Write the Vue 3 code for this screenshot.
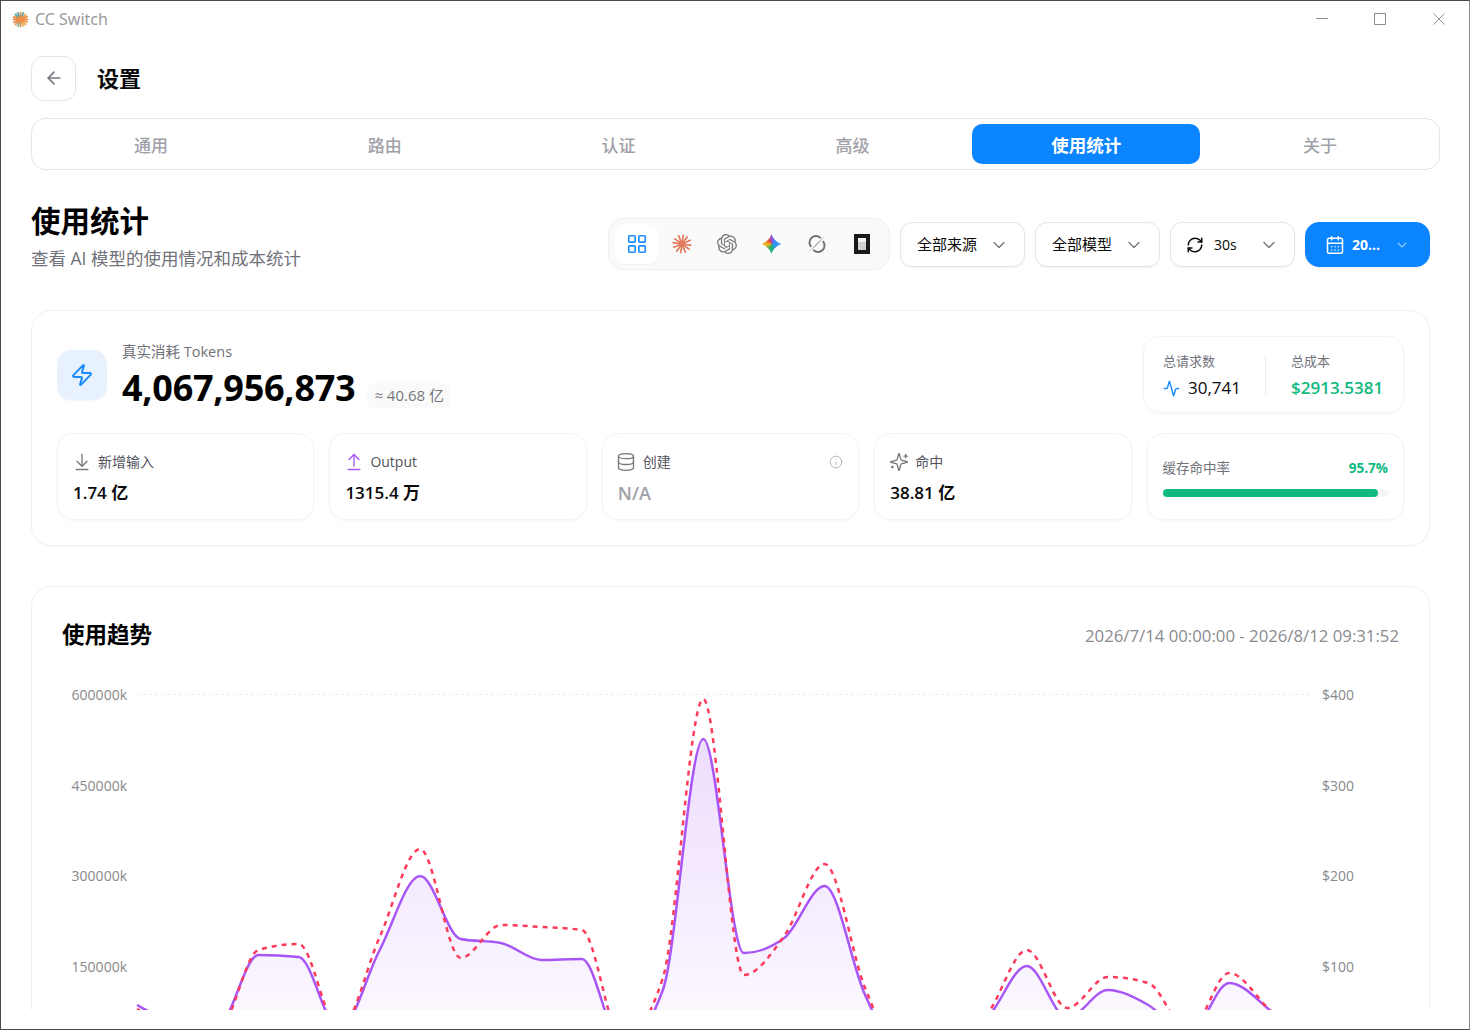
<script setup>
import { computed } from 'vue'

const tabs = ['通用', '路由', '认证', '高级', '使用统计', '关于']
const claudeRays = [0, 28, 58, 90, 118, 150, 180, 208, 240, 270, 298, 330]
const logoRays = [
  { a: 0, c: '#e8a04c' }, { a: 45, c: '#e8a95a' }, { a: 90, c: '#ea8f45' }, { a: 135, c: '#e9b25a' },
  { a: 180, c: '#e8a04c' }, { a: 225, c: '#e89a52' }, { a: 270, c: '#e8843c' }, { a: 315, c: '#5fa8a8' },
  { a: 22, c: '#5c9ca8' }, { a: 67, c: '#e8843c' }, { a: 112, c: '#ee9a50' }, { a: 157, c: '#e8b460' },
  { a: 202, c: '#7fb0a0' }, { a: 247, c: '#e08a4c' }, { a: 292, c: '#e8843c' }, { a: 337, c: '#5c9ca8' },
]

const xs = Array.from({ length: 30 }, (_, i) => 137 + i * 40.45)

const purple = [1005, 1022, 1025, 955, 957, 1030, 950, 876, 939, 943, 960, 959, 1045, 990, 739, 953, 938, 886, 995, 1060, 1040, 1019, 966, 1018, 990, 1005, 1035, 983, 1010, 1050]
const red = [1009, 1026, 1030, 950, 944, 1030, 937, 849, 958, 925, 927, 930, 1040, 978, 699, 975, 936, 864, 988, 1060, 1040, 1015, 950, 1008, 977, 983, 1032, 973, 1010, 1050]

// same monotone interpolation as the chart lib
function monotone(ys) {
  const n = ys.length
  const h = xs[1] - xs[0]
  const d = ys.slice(1).map((y, i) => (y - ys[i]) / h)
  const m = ys.map((_, i) => {
    if (i === 0 || i === n - 1) return 0
    const a = d[i - 1]
    const b = d[i]
    if (a * b <= 0) return 0
    return Math.sign(a) * Math.min(2 * Math.abs(a), 2 * Math.abs(b), Math.abs(a + b) / 2)
  })
  m[0] = (3 * d[0] - m[1]) / 2
  m[n - 1] = (3 * d[n - 2] - m[n - 2]) / 2
  let path = `M${xs[0]},${ys[0]}`
  for (let i = 0; i < n - 1; i++) {
    const t = h / 3
    path += `C${xs[i] + t},${ys[i] + m[i] * t} ${xs[i + 1] - t},${ys[i + 1] - m[i + 1] * t} ${xs[i + 1]},${ys[i + 1]}`
  }
  return path
}

const purpleLine = computed(() => monotone(purple))
const purpleArea = computed(() => `${monotone(purple)}L${xs[29]},1057L${xs[0]},1057Z`)
const redLine = computed(() => monotone(red))

const ticks = [
  { y: 694, left: '600000k', right: '$400' },
  { y: 785, left: '450000k', right: '$300' },
  { y: 875, left: '300000k', right: '$200' },
  { y: 966, left: '150000k', right: '$100' },
]
</script>

<template>
  <div class="window">
    <div class="titlebar">
      <svg class="app-logo" viewBox="0 0 24 24">
        <line v-for="r in logoRays" :key="r.a" x1="12" y1="12" x2="12" y2="1" :stroke="r.c" stroke-width="2.6" :transform="`rotate(${r.a} 12 12)`" />
        <circle cx="12" cy="12" r="5" fill="#ea8f45" />
      </svg>
      <span class="app-name">CC Switch</span>
      <div class="win-controls">
        <svg viewBox="0 0 12 12"><path d="M0 5.5h12" /></svg>
        <svg viewBox="0 0 12 12"><rect x="0.5" y="0.5" width="11" height="11" /></svg>
        <svg viewBox="0 0 12 12"><path d="M0.5 0.5l11 11M11.5 0.5l-11 11" /></svg>
      </div>
    </div>

    <main class="content">
      <header class="page-head">
        <button class="back-btn">
          <svg class="ic" viewBox="0 0 24 24"><path d="m12 19-7-7 7-7" /><path d="M19 12H5" /></svg>
        </button>
        <h1>设置</h1>
      </header>

      <nav class="tabs">
        <div v-for="t in tabs" :key="t" class="tab" :class="{ active: t === '使用统计' }">{{ t }}</div>
      </nav>

      <section class="usage-head">
        <div class="usage-title">
          <h2>使用统计</h2>
          <p>查看 AI 模型的使用情况和成本统计</p>
        </div>
        <div class="filters">
          <div class="app-picker">
            <div class="app-btn active">
              <svg class="ic blue" viewBox="0 0 24 24">
                <rect x="3" y="3" width="7" height="7" rx="1" /><rect x="14" y="3" width="7" height="7" rx="1" />
                <rect x="14" y="14" width="7" height="7" rx="1" /><rect x="3" y="14" width="7" height="7" rx="1" />
              </svg>
            </div>
            <div class="app-btn">
              <svg class="brand" viewBox="0 0 24 24">
                <line v-for="a in claudeRays" :key="a" x1="12" y1="12" x2="12" y2="0.5" stroke="#e07a5a" stroke-width="2" :transform="`rotate(${a + 8} 12 12)`" />
                <circle cx="12" cy="12" r="3.5" fill="#e07a5a" />
              </svg>
            </div>
            <div class="app-btn">
              <svg class="brand" viewBox="0 0 24 24">
                <path fill="#77777d" d="M22.2819 9.8211a5.9847 5.9847 0 0 0-.5157-4.9108 6.0462 6.0462 0 0 0-6.5098-2.9A6.0651 6.0651 0 0 0 4.9807 4.1818a5.9847 5.9847 0 0 0-3.9977 2.9 6.0462 6.0462 0 0 0 .7427 7.0966 5.98 5.98 0 0 0 .511 4.9107 6.051 6.051 0 0 0 6.5146 2.9001A5.9847 5.9847 0 0 0 13.2599 24a6.0557 6.0557 0 0 0 5.7718-4.2058 5.9894 5.9894 0 0 0 3.9977-2.9001 6.0557 6.0557 0 0 0-.7475-7.0729zm-9.022 12.6081a4.4755 4.4755 0 0 1-2.8764-1.0408l.1419-.0804 4.7783-2.7582a.7948.7948 0 0 0 .3927-.6813v-6.7369l2.02 1.1686a.071.071 0 0 1 .038.052v5.5826a4.504 4.504 0 0 1-4.4945 4.4944zm-9.6607-4.1254a4.4708 4.4708 0 0 1-.5346-3.0137l.142.0852 4.783 2.7582a.7712.7712 0 0 0 .7806 0l5.8428-3.3685v2.3324a.0804.0804 0 0 1-.0332.0615L9.74 19.9502a4.4992 4.4992 0 0 1-6.1408-1.6464zM2.3408 7.8956a4.485 4.485 0 0 1 2.3655-1.9728V11.6a.7664.7664 0 0 0 .3879.6765l5.8144 3.3543-2.0201 1.1685a.0757.0757 0 0 1-.071 0l-4.8303-2.7865A4.504 4.504 0 0 1 2.3408 7.872zm16.5963 3.8558L13.1038 8.364 15.1192 7.2a.0757.0757 0 0 1 .071 0l4.8303 2.7913a4.4944 4.4944 0 0 1-.6765 8.1042v-5.6772a.79.79 0 0 0-.407-.667zm2.0107-3.0231l-.142-.0852-4.7735-2.7818a.7759.7759 0 0 0-.7854 0L9.409 9.2297V6.8974a.0662.0662 0 0 1 .0284-.0615l4.8303-2.7866a4.4992 4.4992 0 0 1 6.6802 4.66zM8.3065 12.863l-2.02-1.1638a.0804.0804 0 0 1-.038-.0567V6.0742a4.4992 4.4992 0 0 1 7.3757-3.4537l-.142.0805L8.704 5.459a.7948.7948 0 0 0-.3927.6813zm1.0976-2.3654l2.602-1.4998 2.6069 1.4998v2.9994l-2.5974 1.4997-2.6067-1.4997Z" />
              </svg>
            </div>
            <div class="app-btn">
              <div class="gemini"></div>
            </div>
            <div class="app-btn">
              <svg class="brand" viewBox="0 0 24 24">
                <path fill="none" stroke="#707076" stroke-width="2.3" d="M19 8.5A7.6 7.6 0 0 1 7.5 19M5 15.5A7.6 7.6 0 0 1 16.5 5" />
                <path fill="#8e8e94" d="M22.5 1.5 12.6 12.4 1.5 22.5l9.9-10.9z" />
              </svg>
            </div>
            <div class="app-btn">
              <div class="opencode"><span></span></div>
            </div>
          </div>

          <button class="select"><span class="select-text">全部来源</span>
            <svg class="ic chev" viewBox="0 0 24 24"><path d="m6 9 6 6 6-6" /></svg>
          </button>
          <button class="select"><span class="select-text">全部模型</span>
            <svg class="ic chev" viewBox="0 0 24 24"><path d="m6 9 6 6 6-6" /></svg>
          </button>
          <button class="select">
            <svg class="ic refresh" viewBox="0 0 24 24">
              <path d="M3 12a9 9 0 0 1 9-9 9.75 9.75 0 0 1 6.74 2.74L21 8" /><path d="M21 3v5h-5" />
              <path d="M21 12a9 9 0 0 1-9 9 9.75 9.75 0 0 1-6.74-2.74L3 16" /><path d="M8 16H3v5" />
            </svg>
            <span>30s</span>
            <svg class="ic chev" viewBox="0 0 24 24"><path d="m6 9 6 6 6-6" /></svg>
          </button>
          <button class="select date">
            <svg class="ic cal" viewBox="0 0 24 24">
              <path d="M8 2v4" /><path d="M16 2v4" /><rect x="3" y="4" width="18" height="18" rx="2" /><path d="M3 10h18" />
              <path d="M8 14h.01" /><path d="M12 14h.01" /><path d="M16 14h.01" /><path d="M8 18h.01" /><path d="M12 18h.01" /><path d="M16 18h.01" />
            </svg>
            <span>20...</span>
            <svg class="ic chev small" viewBox="0 0 24 24"><path d="m6 9 6 6 6-6" /></svg>
          </button>
        </div>
      </section>

      <section class="card summary">
        <div class="summary-top">
          <div class="zap-tile">
            <svg class="ic zap" viewBox="0 0 24 24">
              <path d="M4 14a1 1 0 0 1-.78-1.63l9.9-10.2a.5.5 0 0 1 .86.46l-1.92 6.02A1 1 0 0 0 13 10h7a1 1 0 0 1 .78 1.63l-9.9 10.2a.5.5 0 0 1-.86-.46l1.92-6.02A1 1 0 0 0 11 14z" />
            </svg>
          </div>
          <div class="total">
            <div class="total-label">真实消耗 Tokens</div>
            <div class="total-row">
              <span class="total-num">4,067,956,873</span>
              <span class="total-pill">≈ 40.68 亿</span>
            </div>
          </div>
          <div class="req-box">
            <div class="req-col">
              <div class="req-label">总请求数</div>
              <div class="req-value">
                <svg class="ic activity" viewBox="0 0 24 24">
                  <path d="M22 12h-2.48a2 2 0 0 0-1.93 1.46l-2.35 8.36a.25.25 0 0 1-.48 0L9.24 2.18a.25.25 0 0 0-.48 0l-2.35 8.36A2 2 0 0 1 4.49 12H2" />
                </svg>
                30,741
              </div>
            </div>
            <div class="req-divider"></div>
            <div class="req-col">
              <div class="req-label">总成本</div>
              <div class="req-value green">$2913.5381</div>
            </div>
          </div>
        </div>

        <div class="stat-grid">
          <div class="stat">
            <div class="stat-label">
              <svg class="ic" viewBox="0 0 24 24"><path d="M12 17V3" /><path d="m6 11 6 6 6-6" /><path d="M19 21H5" /></svg>
              新增输入
            </div>
            <div class="stat-value">1.74 亿</div>
          </div>
          <div class="stat">
            <div class="stat-label">
              <svg class="ic violet" viewBox="0 0 24 24"><path d="m18 9-6-6-6 6" /><path d="M12 3v14" /><path d="M5 21h14" /></svg>
              Output
            </div>
            <div class="stat-value">1315.4 万</div>
          </div>
          <div class="stat">
            <div class="stat-label">
              <svg class="ic" viewBox="0 0 24 24"><ellipse cx="12" cy="5" rx="9" ry="3" /><path d="M3 5V19A9 3 0 0 0 21 19V5" /><path d="M3 12A9 3 0 0 0 21 12" /></svg>
              创建
              <svg class="ic info" viewBox="0 0 24 24"><circle cx="12" cy="12" r="10" /><path d="M12 16v-4" /><path d="M12 8h.01" /></svg>
            </div>
            <div class="stat-value na">N/A</div>
          </div>
          <div class="stat">
            <div class="stat-label">
              <svg class="ic" viewBox="0 0 24 24">
                <path d="M9.937 15.5A2 2 0 0 0 8.5 14.063l-6.135-1.582a.5.5 0 0 1 0-.962L8.5 9.936A2 2 0 0 0 9.937 8.5l1.582-6.135a.5.5 0 0 1 .963 0L14.063 8.5A2 2 0 0 0 15.5 9.937l6.135 1.581a.5.5 0 0 1 0 .964L15.5 14.063a2 2 0 0 0-1.437 1.437l-1.582 6.135a.5.5 0 0 1-.963 0z" />
                <path d="M20 3v4" /><path d="M22 5h-4" /><path d="M4 17v2" /><path d="M5 18H3" />
              </svg>
              命中
            </div>
            <div class="stat-value">38.81 亿</div>
          </div>
          <div class="stat cache">
            <div class="cache-row">
              <span class="cache-label">缓存命中率</span>
              <span class="cache-pct">95.7%</span>
            </div>
            <div class="bar"><div class="bar-fill" :style="{ width: '95.7%' }"></div></div>
          </div>
        </div>
      </section>

      <section class="card trend">
        <div class="trend-head">
          <h3>使用趋势</h3>
          <span class="trend-range">2026/7/14 00:00:00 - 2026/8/12 09:31:52</span>
        </div>
        <!-- viewBox is kept in page coords, easier to compare with the design -->
        <svg class="chart" viewBox="62 680 1337 400">
          <defs>
            <linearGradient id="areaFill" x1="0" y1="0" x2="0" y2="1">
              <stop offset="0" stop-color="#a855f7" stop-opacity="0.2" />
              <stop offset="1" stop-color="#a855f7" stop-opacity="0.02" />
            </linearGradient>
          </defs>
          <line x1="137" y1="694.5" x2="1310" y2="694.5" stroke="#eeeeee" stroke-dasharray="3 3" />
          <g v-for="t in ticks" :key="t.y">
            <text x="127" :y="t.y + 5.5" text-anchor="end" class="tick">{{ t.left }}</text>
            <text x="1322" :y="t.y + 5.5" class="tick">{{ t.right }}</text>
          </g>
          <path :d="purpleArea" fill="url(#areaFill)" />
          <path :d="purpleLine" fill="none" stroke="#a855f7" stroke-width="2.5" />
          <path :d="redLine" fill="none" stroke="#ff3b5c" stroke-width="2.5" stroke-dasharray="5 5" />
        </svg>
      </section>
    </main>
  </div>
</template>

<style>
html, body {
  margin: 0;
  background: #fff;
  overflow: hidden;
}
</style>

<style scoped>
.window {
  width: 1470px;
  height: 1030px;
  box-sizing: border-box;
  border: 1px solid #4a4a4a;
  border-right-color: #8c8c8c;
  background: #fff;
  display: flex;
  flex-direction: column;
  font-family: "Open Sans", "Noto Sans CJK SC", sans-serif;
  color: #0a0a0a;
}

.titlebar {
  height: 36px;
  flex: none;
  display: flex;
  align-items: center;
  padding-left: 11px;
}

.app-logo {
  width: 17px;
  height: 17px;
}

.app-name {
  margin-left: 6px;
  font-size: 16px;
  color: #9a9a9a;
  font-family: "Noto Sans", sans-serif;
}

.win-controls {
  margin-left: auto;
  display: flex;
  gap: 46px;
  padding-right: 24px;
}

.win-controls svg {
  width: 12px;
  height: 12px;
  fill: none;
  stroke: #8f8f8f;
  stroke-width: 1;
}

.win-controls svg:nth-child(2) {
  margin-right: 1px;
}

.content {
  height: 973px;
  flex: none;
  overflow: hidden;
  padding: 19px 29px 0 30px;
  box-sizing: border-box;
}

.ic {
  fill: none;
  stroke: currentColor;
  stroke-width: 2;
  stroke-linecap: round;
  stroke-linejoin: round;
}

.page-head {
  display: flex;
  align-items: center;
  gap: 21px;
}

.page-head h1 {
  margin: 0 0 4px;
  font-size: 22px;
  font-weight: 700;
}

.back-btn {
  width: 45px;
  height: 45px;
  background: #fff;
  border: 1px solid #e5e5e5;
  border-radius: 12px;
  padding: 0 0 2px;
  display: flex;
  align-items: center;
  justify-content: center;
  color: #77777d;
}

.back-btn svg {
  width: 20px;
  height: 20px;
}

.tabs {
  margin-top: 17px;
  height: 52px;
  box-sizing: border-box;
  border: 1px solid #e5e5e5;
  border-radius: 14px;
  padding: 5px;
  display: grid;
  grid-template-columns: repeat(6, 1fr);
  gap: 6px;
}

.tab {
  display: flex;
  align-items: center;
  justify-content: center;
  font-size: 17px;
  font-weight: 500;
  color: #a1a1aa;
  border-radius: 10px;
}

.tab.active {
  background: #0a84ff;
  color: #fff;
  font-weight: 700;
  font-size: 17.5px;
}

.usage-head {
  margin-top: 32px;
  width: 1399px;
  display: flex;
  justify-content: space-between;
  align-items: flex-start;
}

.usage-title h2 {
  margin: 0;
  font-size: 29.5px;
  line-height: 38px;
  font-weight: 700;
  color: #000;
}

.usage-title p {
  margin: 6px 0 0;
  font-size: 17.5px;
  line-height: 24px;
  color: #71717a;
}

.filters {
  display: flex;
  align-items: center;
  gap: 10px;
  margin-top: 17px;
}

.app-picker {
  height: 52px;
  width: 282px;
  box-sizing: border-box;
  display: flex;
  align-items: center;
  padding: 0 5px;
  background: #fafafa;
  border: 1px solid #eeeeee;
  border-radius: 16px;
  margin-top: -1px;
}

.app-btn {
  width: 45px;
  height: 40px;
  display: flex;
  align-items: center;
  justify-content: center;
  border-radius: 12px;
  flex: none;
}

.app-btn.active {
  background: #fff;
  box-shadow: 0 1px 2px rgba(0, 0, 0, 0.04);
}

.blue {
  width: 22px;
  height: 22px;
  color: #1a8cff;
  stroke-width: 1.8;
}

.brand {
  width: 20px;
  height: 20px;
}

.gemini {
  width: 20px;
  height: 20px;
  background: conic-gradient(from 0deg at 50% 50%, #8a50d8 0deg, #3b8cf5 50deg, #2f9cf0 110deg, #2a9ad0 140deg, #1fb08a 175deg, #38b060 210deg, #f2b820 265deg, #ee4a40 320deg, #8a50d8 360deg);
  clip-path: path("M10 0C11.2 4 14.5 8 20 10 14.5 12 11.2 16 10 20 8.8 16 5.5 12 0 10 5.5 8 8.8 4 10 0Z");
}

.opencode {
  width: 16px;
  height: 20px;
  background: #1a1a1a;
  display: flex;
  align-items: center;
  justify-content: center;
}

.opencode span {
  width: 8px;
  height: 12px;
  background: linear-gradient(#f2f2f2 33%, #cfcfcf 33%);
}

.select {
  width: 125px;
  height: 45px;
  box-sizing: border-box;
  background: #fff;
  border: 1px solid #e5e5e5;
  border-radius: 12px;
  box-shadow: 0 1px 2px rgba(0, 0, 0, 0.05);
  padding: 0 15px 0 16px;
  display: flex;
  align-items: center;
  font-family: inherit;
  font-size: 14px;
  color: #0a0a0a;
}

.select-text {
  font-size: 15px;
  margin-top: -2px;
}

.chev {
  width: 20px;
  height: 20px;
  margin-left: auto;
  color: #77777d;
  stroke-width: 1.6;
}

.refresh {
  width: 18px;
  height: 18px;
  margin-right: 10px;
  margin-left: -1px;
}

.date {
  background: #0a84ff;
  border-color: #0a84ff;
  color: #fff;
  font-weight: 700;
  border-radius: 14px;
  padding-right: 19px;
  padding-left: 19px;
}

.cal {
  width: 20px;
  height: 20px;
  margin-right: 7px;
  stroke-width: 1.8;
}

.chev.small {
  width: 16px;
  height: 16px;
  color: rgba(255, 255, 255, 0.55);
}

.card {
  width: 1399px;
  box-sizing: border-box;
  background: #fff;
  border: 1px solid #f0f0f0;
  border-radius: 20px;
  box-shadow: 0 1px 2px rgba(0, 0, 0, 0.02);
}

.summary {
  margin-top: 40px;
  height: 236px;
  padding: 25px 25px 0;
}

.summary-top {
  display: flex;
  align-items: flex-start;
}

.zap-tile {
  width: 50px;
  height: 50px;
  margin-top: 14px;
  border-radius: 14px;
  background: #e8f2ff;
  box-shadow: 0 1px 2px rgba(0, 0, 0, 0.04);
  display: flex;
  align-items: center;
  justify-content: center;
  color: #1a8cff;
}

.zap {
  width: 24px;
  height: 24px;
}

.total {
  margin-left: 15px;
  margin-top: 6px;
}

.total-label {
  font-size: 14.5px;
  line-height: 20px;
  color: #71717a;
}

.total-row {
  display: flex;
  align-items: flex-end;
  gap: 12px;
  margin-top: 2px;
}

.total-num {
  font-size: 36px;
  line-height: 48px;
  font-weight: 700;
  letter-spacing: -0.25px;
  color: #000;
}

.total-pill {
  height: 25px;
  margin-bottom: 4px;
  padding: 0 7px;
  border-radius: 8px;
  background: #fafafa;
  font-size: 15px;
  line-height: 25px;
  color: #77777d;
}

.req-box {
  margin-left: auto;
  width: 261px;
  height: 77px;
  box-sizing: border-box;
  border: 1px solid #f3f3f3;
  border-radius: 16px;
  box-shadow: 0 1px 3px rgba(0, 0, 0, 0.04);
  display: flex;
  align-items: center;
  padding: 0 19px;
}

.req-col {
  flex: none;
  padding-top: 2px;
}

.req-label {
  font-size: 13px;
  line-height: 18px;
  color: #71717a;
}

.req-value {
  margin-top: 7px;
  display: flex;
  align-items: center;
  gap: 8px;
  font-size: 17px;
  line-height: 22px;
  font-weight: 500;
}

.green {
  color: #10b981;
  font-weight: 600;
}

.activity {
  width: 17px;
  height: 17px;
  color: #1a8cff;
}

.req-divider {
  width: 1px;
  height: 40px;
  background: #eeeeee;
  margin: 0 25px 0 24px;
}

.stat-grid {
  margin-top: 20px;
  display: grid;
  grid-template-columns: repeat(5, 1fr);
  gap: 15px;
}

.stat {
  height: 87px;
  box-sizing: border-box;
  border: 1px solid #f3f3f3;
  border-radius: 16px;
  box-shadow: 0 1px 3px rgba(0, 0, 0, 0.04);
  padding: 18px 15px 0;
}

.stat-label {
  display: flex;
  align-items: center;
  gap: 6.5px;
  font-size: 14px;
  line-height: 20px;
  color: #52525b;
}

.stat-label .ic {
  width: 20px;
  height: 20px;
  margin-left: -1.5px;
  flex: none;
  stroke-width: 1.6;
  color: #77777d;
}

.stat-label .violet {
  color: #a855f7;
}

.stat-label .info {
  width: 14px;
  height: 14px;
  margin-left: auto;
  color: #a1a1aa;
  stroke-width: 1.3;
}

.stat-value {
  margin-top: 9px;
  font-size: 17px;
  line-height: 24px;
  font-weight: 600;
}

.stat-value.na {
  color: #a1a1aa;
  font-size: 18px;
}

.cache-row {
  display: flex;
  justify-content: space-between;
  align-items: center;
  margin-top: 6px;
  font-size: 13.5px;
  line-height: 20px;
}

.cache-label {
  color: #71717a;
}

.cache-pct {
  color: #10b981;
  font-weight: 700;
}

.bar {
  margin-top: 11px;
  height: 8px;
  border-radius: 4px;
  background: #f5f5f5;
}

.bar-fill {
  height: 100%;
  border-radius: 4px;
  background: #10b981;
}

.trend {
  margin-top: 40px;
  height: 500px;
  padding: 30px 30px 0;
}

.trend-head {
  display: flex;
  justify-content: space-between;
  align-items: center;
  height: 36px;
}

.trend-head h3 {
  margin: 0 0 4px;
  font-size: 22.5px;
  font-weight: 700;
  color: #000;
}

.trend-range {
  font-size: 16.75px;
  color: #8a8a8f;
}

.chart {
  display: block;
  width: 1337px;
  height: 400px;
  margin-top: 27px;
}

.tick {
  font-size: 14px;
  fill: #88888d;
}
</style>
